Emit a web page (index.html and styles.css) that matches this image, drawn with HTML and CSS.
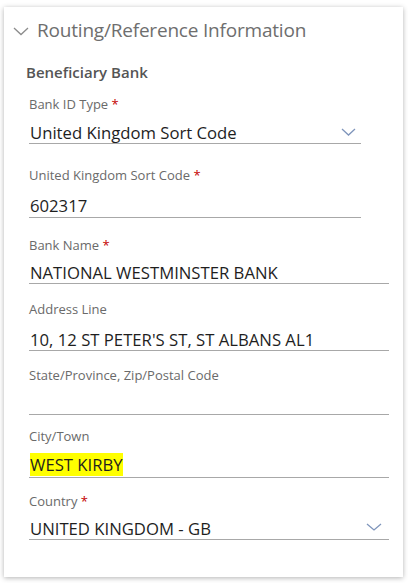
FILE: index.html
```html
<!DOCTYPE html>
<html>
<head>
<meta charset="utf-8">
<link rel="stylesheet" href="styles.css">
</head>
<body>
<div class="card">
  <div class="header">
    <svg class="hchev" width="16" height="9" viewBox="0 0 16 9"><path d="M1 1 L8 7.5 L15 1" fill="none" stroke="#8c8c8c" stroke-width="1.3"/></svg>
    <span class="htitle">Routing/Reference Information</span>
  </div>
  <div class="section">Beneficiary Bank</div>

  <div class="field short">
    <div class="label">Bank ID Type <span class="req">*</span></div>
    <div class="value select">United Kingdom Sort Code
      <svg class="chev" width="15" height="8" viewBox="0 0 15 8"><path d="M1 1 L7.5 7 L14 1" fill="none" stroke="#7f95bb" stroke-width="1.3"/></svg>
    </div>
  </div>

  <div class="field short">
    <div class="label">United Kingdom Sort Code <span class="req">*</span></div>
    <div class="value">602317</div>
  </div>

  <div class="field">
    <div class="label">Bank Name <span class="req">*</span></div>
    <div class="value">NATIONAL WESTMINSTER BANK</div>
  </div>

  <div class="field">
    <div class="label">Address Line</div>
    <div class="value">10, 12 ST PETER'S ST, ST ALBANS AL1</div>
  </div>

  <div class="field">
    <div class="label">State/Province, Zip/Postal Code</div>
    <div class="value"></div>
  </div>

  <div class="field">
    <div class="label">City/Town</div>
    <div class="value"><span class="hl">WEST KIRBY</span></div>
  </div>

  <div class="field">
    <div class="label">Country <span class="req">*</span></div>
    <div class="value select">UNITED KINGDOM - GB
      <svg class="chev wide" width="16" height="8" viewBox="0 0 16 8"><path d="M1 1 L8 7 L15 1" fill="none" stroke="#7f95bb" stroke-width="1.3"/></svg>
    </div>
  </div>
</div>
</body>
</html>
```
FILE: styles.css
```css
html, body { margin: 0; padding: 0; background: #fff; }
body {
  font-family: "Open Sans", "Noto Sans", sans-serif;
  width: 408px;
  height: 583px;
  overflow: hidden;
}
.card {
  margin: 7px 5px 0 4px;
  height: 570px;
  background: #fff;
  box-shadow: 0 1px 5px rgba(0,0,0,0.3);
  box-sizing: border-box;
  padding: 10px 0 0 25px;
}
.header {
  display: flex;
  align-items: center;
  height: 26px;
  margin-left: -16px;
}
.hchev { margin: 3px 8px 0 0; flex: none; }
.htitle {
  font-size: 19px;
  line-height: 26px;
  color: #6e6e6e;
  letter-spacing: -0.2px;
}
.section {
  font-size: 15px;
  line-height: 20px;
  font-weight: 600;
  color: #555;
  margin: 18.5px 0 0 -3px;
}
.field { width: 360px; margin-top: 15px; }
.field.short { width: 332px; }
.label {
  font-size: 13px;
  color: #6a6a6a;
  line-height: 18px;
}
.req { color: #c40000; }
.value {
  position: relative;
  font-size: 16.7px;
  color: #1e1e1e;
  line-height: 20px;
  height: 20px;
  padding: 10px 0 0 1px;
  border-bottom: 1px solid #a8a8a8;
}
.chev { position: absolute; right: 5px; bottom: 7px; }
.chev.wide { right: 7px; bottom: 8px; }
.hl { background: #ffff00; }

/* per-field vertical rhythm as in the original form */
.field:nth-child(3) { margin-top: 13.5px; }
.field:nth-child(4) { margin-top: 21.5px; }
.field:nth-child(4) .value { padding-top: 12.5px; padding-bottom: 1px; }
.field:nth-child(5) { margin-top: 18px; }
.field:nth-child(5) .value { padding-top: 8.5px; }
.field:nth-child(6) { margin-top: 16px; }
.field:nth-child(6) .value { padding-top: 12px; }
.field:nth-child(8) { margin-top: 12px; }
.field:nth-child(8) .value { padding-bottom: 2px; }
.field:nth-child(9) { margin-top: 14px; }
.field:nth-child(9) .value { padding-top: 9.5px; }
```
